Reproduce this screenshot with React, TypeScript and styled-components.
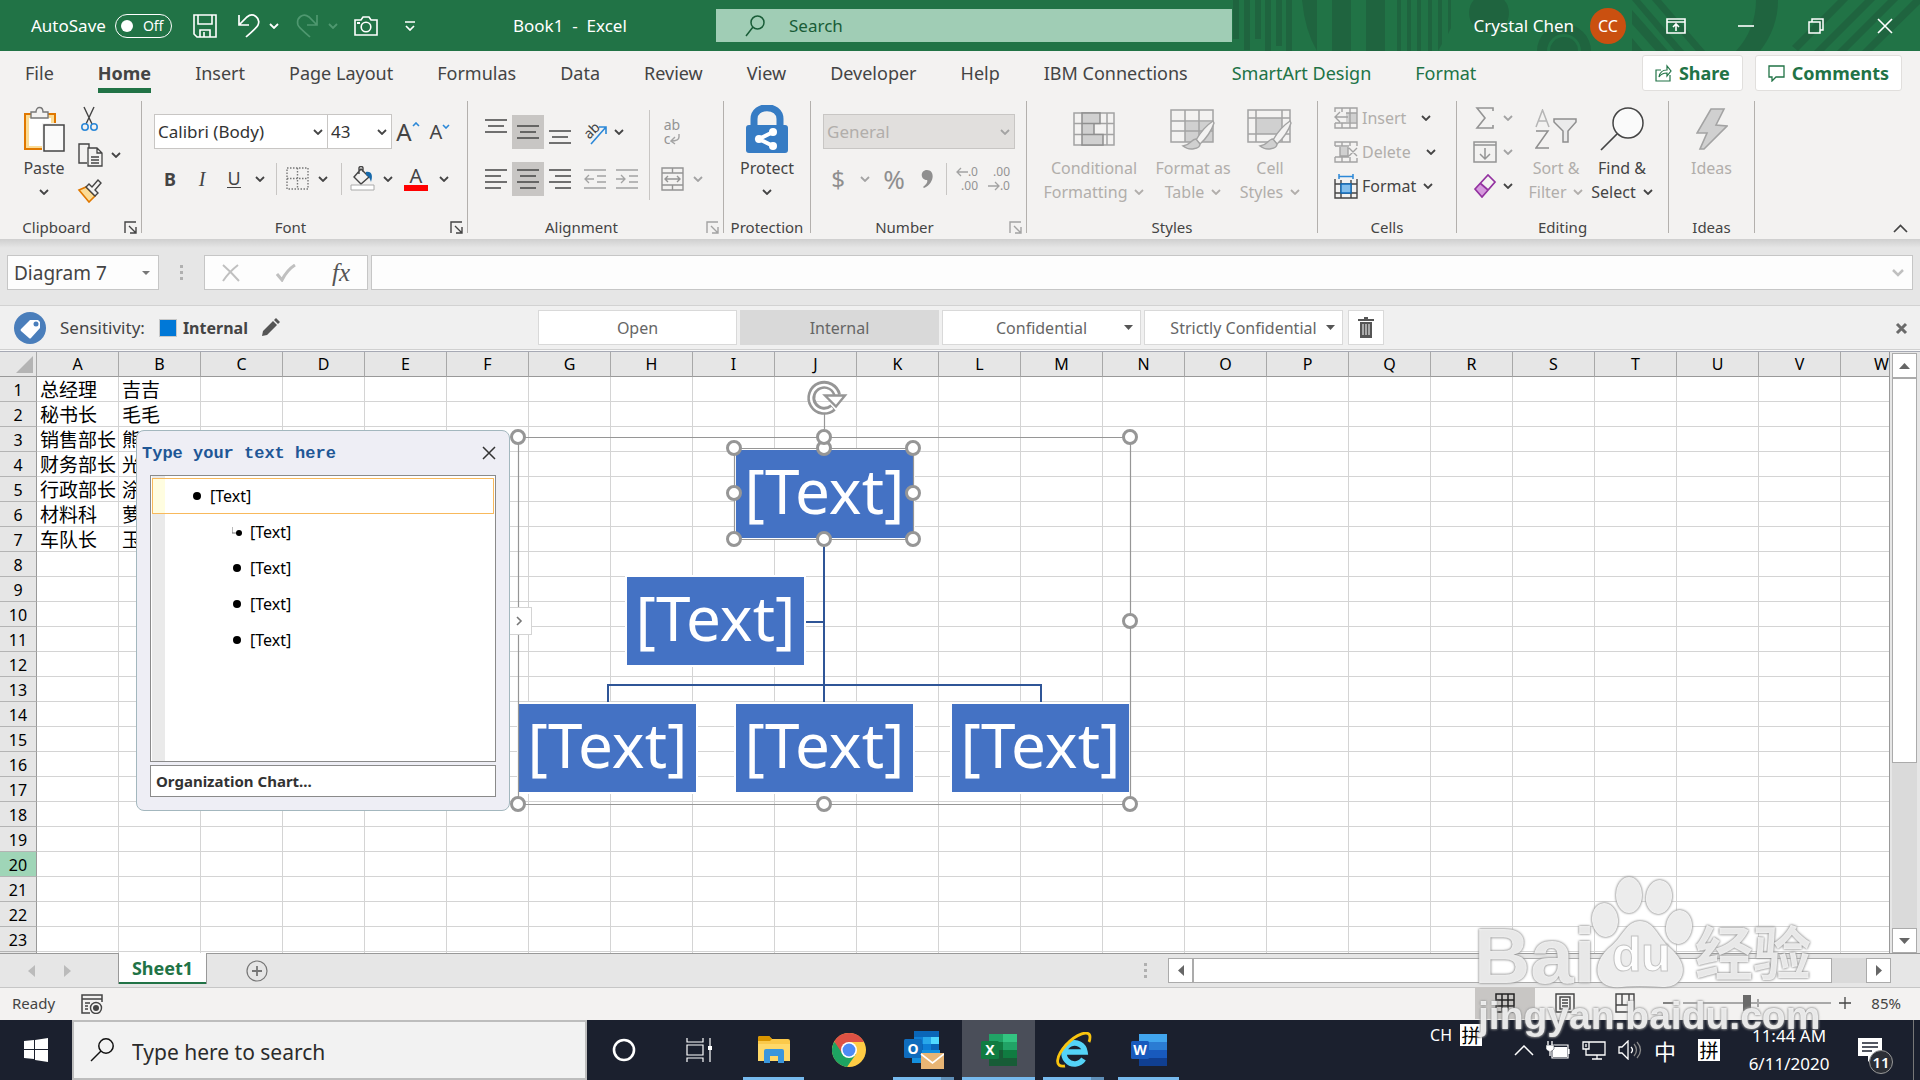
import React from "react";
import styled, { createGlobalStyle, css } from "styled-components";

const GlobalStyle = createGlobalStyle`
  *, *::before, *::after { box-sizing: border-box; }
  html, body { margin: 0; padding: 0; }
  body {
    overflow: hidden;
    font-family: "Noto Sans", "Noto Sans CJK SC", sans-serif;
    font-size: 16px;
    color: #444;
  }
  button, input, select { font: inherit; color: inherit; }
  button { background: none; border: 0; padding: 0; margin: 0; }
  svg { display: block; flex: none; }
`;

/* ---------- shared pieces ---------- */

const App_ = styled.div`
  display: flex;
  flex-direction: column;
  height: 100vh;
  background: #e6e6e6;
`;

const Icon = ({ w, h, children }: { w: number; h: number; children: React.ReactNode }) => (
  <svg width={w} height={h} viewBox={`0 0 ${w} ${h}`} fill="none" aria-hidden="true">
    {children}
  </svg>
);

const Chevron = ({ color = "#444", up = false }: { color?: string; up?: boolean }) => (
  <svg width="10" height="6" viewBox="0 0 10 6" fill="none" aria-hidden="true">
    <path d={up ? "M1 5l4-4 4 4" : "M1 1l4 4 4-4"} stroke={color} strokeWidth="1.8" />
  </svg>
);

const GREY = "#a3a3a3";
const DARK = "#444";
const BLUE = "#2b88d8";

/* ---------- title bar ---------- */

const TitleBar = styled.header`
  position: relative;
  display: flex;
  align-items: center;
  flex: none;
  height: 51px;
  background: #217346;
  color: #fff;
  font-size: 17px;
`;

const TitleArt = styled.svg`
  position: absolute;
  top: 0;
  right: 0;
`;

const TitleSide = styled.div<{ $end?: boolean }>`
  position: relative;
  display: flex;
  align-items: center;
  flex: 1 1 716px;
  min-width: 0;
  ${(p) => p.$end && css`
    flex-basis: 688px;
    justify-content: flex-end;
  `}
`;

const QuickAccess = styled.div`
  display: flex;
  align-items: center;
  width: 513px;
  padding-left: 31px;
`;

const AutoSave = styled.label`
  display: flex;
  align-items: center;
  gap: 9px;
  width: 162px;
`;

const Toggle = styled.span`
  display: flex;
  align-items: center;
  gap: 10px;
  width: 57px;
  height: 24px;
  padding-left: 5px;
  border: 1px solid #fff;
  border-radius: 12px;
  font-size: 14px;
`;

const ToggleInput = styled.input`
  appearance: none;
  width: 12px;
  height: 12px;
  margin: 0;
  border-radius: 50%;
  background: #fff;
`;

const TitleButton = styled.button<{ $w: number }>`
  display: flex;
  align-items: center;
  justify-content: flex-start;
  gap: 9px;
  width: ${(p) => p.$w}px;
  height: 40px;
`;

const SearchBox = styled.label`
  position: relative;
  display: flex;
  align-items: center;
  flex: none;
  gap: 24px;
  width: 516px;
  height: 33px;
  padding-left: 29px;
  background: #a0cdb5;
`;

const SearchInput = styled.input`
  flex: 1;
  min-width: 0;
  border: 0;
  padding: 0;
  background: none;
  color: #185c37;
  outline: none;
  &::placeholder { color: #185c37; opacity: 1; }
`;

const Avatar = styled.span`
  display: grid;
  place-items: center;
  width: 36px;
  height: 36px;
  margin: 0 40px 0 16px;
  border-radius: 50%;
  background: #ca5010;
  font-size: 16px;
`;

const WindowButton = styled.button<{ $w: number }>`
  display: flex;
  justify-content: flex-start;
  width: ${(p) => p.$w}px;
`;

const TitleBarView = () => (
  <TitleBar>
    <TitleArt width="688" height="51" viewBox="0 0 688 51" fill="#1f643f" aria-hidden="true">
      <path d="M1 0h6v39H1zM12 0h6v50h-6zM23 0h6v39h-6zM33 0h6v51h-6zM44 0h6v46h-6zM54 0h6v51h-6z" />
      <path d="M70 0h15v51q-12-20-15-51zM100 0h19v51h-19zM134 0h19v51h-19z" />
      <path d="M165 0h4v51h-4zM175 0h4v51h-4zM185 0h4v51h-4zM196 0h4v51h-4zM206 0h4v44l-4 7zM216 0h3v28l-3 6z" />
      <circle cx="257" cy="13" r="20" />
      <path d="M305 51a27 27 0 0 1 54 0h-10a17 17 0 0 0-34 0z" />
      <circle cx="332" cy="51" r="14" />
      <path d="M400 10l36 41h-12l-24-27zM400 0h8l44 51h-9zM420 0h9l44 51h-9zM400 38l11 13h-11z" />
      <path d="M524 0h22q0 28-18 51h-24q20-22 20-51z" />
      <path d="M560 46L606 0h10l-50 51zM582 51L633 0h10l-51 51zM605 51L656 0h10l-51 51zM630 51L681 0h7v4l-48 47z" />
    </TitleArt>
    <TitleSide>
      <QuickAccess>
        <AutoSave>
          AutoSave
          <Toggle>
            <ToggleInput type="checkbox" aria-label="AutoSave" />
            Off
          </Toggle>
        </AutoSave>
        <TitleButton $w={44} aria-label="Save">
          <Icon w={24} h={24}>
            <path d="M1 1h22v22H4l-3-3zM5 1v9h14V1M7 23v-7h10v7M11 18v5" stroke="#fff" strokeWidth="1.6" />
          </Icon>
        </TitleButton>
        <TitleButton $w={59} aria-label="Undo">
          <Icon w={23} h={24}>
            <path d="M2 1v10h10M2 11l8-8c6-5 14 1 11 8-1 3-8 8-12 12" stroke="#fff" strokeWidth="1.7" />
          </Icon>
          <Chevron color="#fff" />
        </TitleButton>
        <TitleButton $w={58} aria-label="Redo" disabled>
          <Icon w={23} h={24}>
            <path d="M21 1v10H11M21 11l-8-8C7-2 0 4 2 11c1 3 8 8 12 12" stroke="#4f9870" strokeWidth="1.7" />
          </Icon>
          <Chevron color="#4f9870" />
        </TitleButton>
        <TitleButton $w={51} aria-label="Camera">
          <Icon w={24} h={20}>
            <path d="M1 4h6l2-3h6l2 3h6v15H1z" stroke="#fff" strokeWidth="1.6" />
            <circle cx="12" cy="11" r="4.8" stroke="#fff" strokeWidth="1.6" />
            <path d="M3 6h3v2H3z" fill="#fff" />
          </Icon>
        </TitleButton>
        <TitleButton $w={20} aria-label="Customize Quick Access Toolbar">
          <Icon w={10} h={10}>
            <path d="M0 1h10M1 5l4 4 4-4" stroke="#fff" strokeWidth="1.7" />
          </Icon>
        </TitleButton>
      </QuickAccess>
      <span>Book1&nbsp; -&nbsp; Excel</span>
    </TitleSide>
    <SearchBox>
      <Icon w={20} h={22}>
        <circle cx="12.500" cy="7.500" r="6.500" stroke="#185c37" strokeWidth="1.5" />
        <path d="M8 12L1 21" stroke="#185c37" strokeWidth="1.5" />
      </Icon>
      <SearchInput type="search" placeholder="Search" />
    </SearchBox>
    <TitleSide $end>
      <span>Crystal Chen</span>
      <Avatar>CC</Avatar>
      <WindowButton $w={72} aria-label="Ribbon Display Options">
        <Icon w={20} h={16}>
          <path d="M1 1h18v14H1zM1 4h18M10 13V6M7 9l3-3 3 3" stroke="#fff" strokeWidth="1.6" />
        </Icon>
      </WindowButton>
      <WindowButton $w={70} aria-label="Minimize">
        <Icon w={16} h={16}><path d="M0 8h16" stroke="#fff" strokeWidth="1.6" /></Icon>
      </WindowButton>
      <WindowButton $w={69} aria-label="Restore Down">
        <Icon w={16} h={16}><path d="M1 4h11v11H1zM4 4V1h11v11h-3" stroke="#fff" strokeWidth="1.5" /></Icon>
      </WindowButton>
      <WindowButton $w={43} aria-label="Close">
        <Icon w={16} h={16}><path d="M1 1l14 14M15 1L1 15" stroke="#fff" strokeWidth="1.6" /></Icon>
      </WindowButton>
    </TitleSide>
  </TitleBar>
);

/* ---------- ribbon tabs ---------- */

const TabRow = styled.nav`
  display: flex;
  align-items: center;
  flex: none;
  gap: 44px;
  height: 44px;
  padding: 0 18px 0 25px;
  background: #f3f2f1;
  font-size: 18px;
`;

const Tab = styled.button<{ $active?: boolean; $context?: boolean }>`
  height: 40px;
  padding-top: 4px;
  border-bottom: 5px solid ${(p) => (p.$active ? "#217346" : "transparent")};
  color: ${(p) => (p.$context ? "#217346" : "#444")};
  font-weight: ${(p) => (p.$active ? 700 : 400)};
  white-space: nowrap;
`;

const TabActions = styled.div`
  display: flex;
  gap: 12px;
  margin-left: auto;
`;

const ActionButton = styled.button`
  display: flex;
  align-items: center;
  gap: 7px;
  height: 36px;
  padding: 0 12px;
  border: 1px solid #e1dfdd;
  border-radius: 3px;
  background: #fff;
  color: #217346;
  font-weight: 700;
`;

const TABS = ["File", "Home", "Insert", "Page Layout", "Formulas", "Data", "Review", "View", "Developer", "Help", "IBM Connections", "SmartArt Design", "Format"];

const TabsView = () => (
  <TabRow>
    {TABS.map((t) => (
      <Tab key={t} $active={t === "Home"} $context={t === "SmartArt Design" || t === "Format"}>{t}</Tab>
    ))}
    <TabActions>
      <ActionButton>
        <Icon w={17} h={18}>
          <path d="M6 6H1v11h14v-6M4 13c1-6 4-7 8-7V2l4 5-4 5V9c-4 0-6 1-8 4z" stroke="#217346" strokeWidth="1.2" />
        </Icon>
        Share
      </ActionButton>
      <ActionButton>
        <Icon w={17} h={18}>
          <path d="M1 2h15v11H8l-4 4v-4H1z" stroke="#217346" strokeWidth="1.3" />
        </Icon>
        Comments
      </ActionButton>
    </TabActions>
  </TabRow>
);

/* ---------- ribbon ---------- */

const Ribbon = styled.div`
  display: flex;
  flex: none;
  height: 144px;
  padding: 6px 0;
  background: #f3f2f1;
`;

const Group = styled.section<{ $w: number }>`
  display: flex;
  flex-direction: column;
  flex: none;
  width: ${(p) => p.$w}px;
  border-right: 1px solid #b3b0ad;
`;

const GroupBody = styled.div<{ $pad?: number }>`
  display: flex;
  flex: 1;
  padding-left: ${(p) => p.$pad || 0}px;
`;

const GroupFooter = styled.div<{ $launch?: boolean }>`
  display: grid;
  grid-template-columns: minmax(0, 1fr) ${(p) => (p.$launch ? "24px" : "")};
  padding-right: ${(p) => (p.$launch ? 4 : 0)}px;
  height: 14px;
  font-size: 15px;
  line-height: 16px;
  white-space: nowrap;
`;

const GroupTitle = styled.span`
  display: flex;
  justify-content: center;
`;

const Launcher = styled.button`
  justify-self: end;
`;

const BigButton = styled.button<{ $w?: number; $off?: boolean }>`
  display: flex;
  flex-direction: column;
  align-items: center;
  width: ${(p) => (p.$w ? `${p.$w}px` : "100%")};
  color: ${(p) => (p.$off ? "#b1aeab" : "#444")};
  line-height: 24px;
  white-space: nowrap;
`;

const BigIcon = styled.span`
  display: grid;
  place-items: center;
  height: 55px;
`;

const BigLine = styled.span`
  display: flex;
  align-items: center;
  justify-content: center;
  gap: 7px;
  height: 24px;
`;

const Rows = styled.div`
  display: flex;
  flex-direction: column;
  gap: 12px;
  padding-top: 13px;
`;

const ToolRow = styled.div`
  display: flex;
  align-items: center;
  height: 35px;
`;

const Tool = styled.button<{ $w?: number; $on?: boolean; $left?: number }>`
  display: grid;
  place-items: center;
  width: ${(p) => p.$w || 32}px;
  height: 34px;
  margin-left: ${(p) => p.$left || 0}px;
  background: ${(p) => (p.$on ? "#c8c6c4" : "transparent")};
`;

const Divider = styled.span<{ $m: number; $tall?: boolean }>`
  width: 1px;
  height: ${(p) => (p.$tall ? 90 : 32)}px;
  margin: ${(p) => (p.$tall ? "9px" : "0")} ${(p) => p.$m}px 0;
  background: #c8c6c4;
`;

const Combo = styled.span<{ $w: number; $off?: boolean }>`
  position: relative;
  display: flex;
  align-items: center;
  width: ${(p) => p.$w}px;
  height: 35px;
  border: 1px solid #c8c6c4;
  background: ${(p) => (p.$off ? "#e1dfdd" : "#fff")};
  & + & { border-left: 0; }
  & > svg { position: absolute; right: 4px; }
`;

const ComboSelect = styled.select<{ $off?: boolean }>`
  appearance: none;
  width: 100%;
  height: 100%;
  padding: 0 0 0 3px;
  border: 0;
  border-radius: 0;
  background: transparent;
  color: ${(p) => (p.$off ? "#b1aeab" : "#333")};
  font-size: 17px;
  opacity: 1;
`;

const SmallColumn = styled.div<{ $w?: number; $row: number }>`
  display: grid;
  grid-auto-rows: ${(p) => p.$row}px;
  align-content: start;
  width: ${(p) => (p.$w ? `${p.$w}px` : "auto")};
`;

const SmallButton = styled.button<{ $off?: boolean; $gap?: number }>`
  display: flex;
  align-items: center;
  color: ${(p) => (p.$off ? "#b1aeab" : "#444")};
  & > svg:last-child:not(:first-child) { margin-left: ${(p) => p.$gap || 0}px; }
`;

const SmallLabel = styled.span`
  padding-left: 4px;
`;

const CollapseRibbon = styled.button`
  align-self: flex-end;
  margin: 0 12px 0 auto;
`;

const Footer = ({ title, launch, off }: { title: string; launch?: boolean; off?: boolean }) => (
  <GroupFooter $launch={launch}>
    <GroupTitle>{title}</GroupTitle>
    {launch && (
      <Launcher aria-label={`${title} settings`}>
        <Icon w={13} h={13}>
          <path d="M1 12V1h11M5 5l7 7M12 6v6H6" stroke={off ? GREY : DARK} strokeWidth="1.4" />
        </Icon>
      </Launcher>
    )}
  </GroupFooter>
);

const Lines = ({ widths, top = 0, align = "center" }: { widths: number[]; top?: number; align?: "left" | "center" | "right" }) => (
  <Icon w={22} h={26}>
    {widths.map((w, i) => {
      const x = align === "left" ? 0 : align === "right" ? 22 - w : (22 - w) / 2;
      return <path key={i} d={`M${x} ${top + i * 6 + 1}h${w}`} stroke={DARK} strokeWidth="1.5" />;
    })}
  </Icon>
);

const Glyph = styled.span<{ $size?: number; $bold?: boolean; $italic?: boolean; $under?: boolean; $off?: boolean }>`
  font-size: ${(p) => p.$size || 18}px;
  line-height: 1;
  font-weight: ${(p) => (p.$bold ? 700 : 400)};
  font-style: ${(p) => (p.$italic ? "italic" : "normal")};
  font-family: ${(p) => (p.$italic ? '"Liberation Serif", serif' : "inherit")};
  border-bottom: ${(p) => (p.$under ? "1px solid #444" : "0")};
  color: ${(p) => (p.$off ? "#8f8f8f" : "#444")};
`;

const SizedA = styled.span`
  display: flex;
  align-items: flex-start;
  & > svg { margin-top: 2px; }
`;

const ColorGlyph = styled.span`
  display: flex;
  flex-direction: column;
  align-items: center;
  width: 24px;
  font-size: 20px;
  line-height: 18px;
  border-bottom: 6px solid #f00;
`;

const Decimals = styled.span`
  display: grid;
  justify-items: end;
  width: 24px;
  font-size: 12px;
  line-height: 14px;
  color: #949494;
`;

const DecimalLine = styled.span`
  display: flex;
  align-items: center;
`;

const WrapGlyph = styled.span`
  display: grid;
  font-size: 14px;
  line-height: 14px;
  color: #949494;
`;

const Arrow = ({ right = false }: { right?: boolean }) => (
  <Icon w={12} h={10}>
    <path d={right ? "M0 5h11M7 1l4 4-4 4" : "M12 5H1M5 1L1 5l4 4"} stroke={GREY} strokeWidth="1.3" />
  </Icon>
);

const Brush = () => (
  <>
    <path d="M43 13c-6 4-13 12-17 19l4 4c6-5 12-14 14-21z" fill="#f3f2f1" stroke={GREY} strokeWidth="1.4" />
    <path d="M26 31c-5 0-5 6-13 7 6 5 17 3 17-2z" fill="#d0d0d0" stroke={GREY} strokeWidth="1.4" />
  </>
);

const RibbonView = () => (
  <Ribbon>
    <Group $w={142}>
      <GroupBody $pad={14}>
        <BigButton $w={60}>
          <BigIcon>
            <Icon w={42} h={46}>
              <path d="M2 8h30v35H2z" fill="#fbdc96" stroke="#e07800" strokeWidth="2" />
              <path d="M6 12h22v28H6z" fill="#fff" />
              <path d="M8 12V6h5c0-6 7-6 7 0h5v6z" fill="#f3f2f1" stroke="#777" strokeWidth="1.4" />
              <path d="M19 17h23v29H19z" fill="#f3f2f1" />
              <path d="M21 19h20v26H21z" fill="#fafafa" stroke={DARK} strokeWidth="1.5" />
            </Icon>
          </BigIcon>
          <BigLine>Paste</BigLine>
          <BigLine><Chevron /></BigLine>
        </BigButton>
        <SmallColumn $row={36} $w={60}>
          <SmallButton aria-label="Cut">
            <Icon w={32} h={26}>
              <path d="M10 1l8 17M20 1l-8 17" stroke={DARK} strokeWidth="1.4" />
              <circle cx="11" cy="21" r="3.200" stroke={BLUE} strokeWidth="1.6" />
              <circle cx="20" cy="21" r="3.200" stroke={BLUE} strokeWidth="1.6" />
            </Icon>
          </SmallButton>
          <SmallButton aria-label="Copy" $gap={5}>
            <Icon w={32} h={24}>
              <path d="M13 20H5V1h10v4" stroke={DARK} strokeWidth="1.4" />
              <path d="M14 5h9l5 5v13H14zM23 5v5h5M17 14h8M17 17h8M17 20h8" stroke={DARK} strokeWidth="1.3" />
            </Icon>
            <Chevron />
          </SmallButton>
          <SmallButton aria-label="Format Painter">
            <Icon w={32} h={24}>
              <path d="M5 11l7-3 9 9-6 6z" fill="#fbdc96" stroke="#e07800" strokeWidth="1.6" />
              <path d="M12 8l3-3 3 3 6-7 3 3-6 7 3 3-3 3z" fill="#f3f2f1" stroke={DARK} strokeWidth="1.4" />
            </Icon>
          </SmallButton>
        </SmallColumn>
      </GroupBody>
      <Footer title="Clipboard" launch />
    </Group>

    <Group $w={326}>
      <GroupBody $pad={12}>
        <Rows>
          <ToolRow>
            <Combo $w={174}>
              <ComboSelect aria-label="Font" defaultValue="c"><option value="c">Calibri (Body)</option></ComboSelect>
              <Chevron />
            </Combo>
            <Combo $w={64}>
              <ComboSelect aria-label="Font Size" defaultValue="43"><option>43</option></ComboSelect>
              <Chevron />
            </Combo>
            <Tool aria-label="Increase Font Size">
              <SizedA><Glyph $size={24}>A</Glyph><Icon w={8} h={5}><path d="M1 4l3-3 3 3" stroke={BLUE} strokeWidth="1.6" /></Icon></SizedA>
            </Tool>
            <Tool aria-label="Decrease Font Size">
              <SizedA><Glyph $size={20}>A</Glyph><Icon w={8} h={5}><path d="M1 1l3 3 3-3" stroke={BLUE} strokeWidth="1.6" /></Icon></SizedA>
            </Tool>
          </ToolRow>
          <ToolRow>
            <Tool><Glyph $bold>B</Glyph></Tool>
            <Tool><Glyph $italic $size={20}>I</Glyph></Tool>
            <Tool><Glyph $under>U</Glyph></Tool>
            <Tool $w={20} aria-label="Underline options"><Chevron /></Tool>
            <Divider $m={6} />
            <Tool $w={28} aria-label="Borders">
              <Icon w={23} h={23}>
                <path d="M1 1h21v21H1zM11.500 1v21M1 11.500h21" stroke="#777" strokeWidth="1.4" strokeDasharray="1.500 1.500" />
              </Icon>
            </Tool>
            <Tool $w={24} aria-label="Border options"><Chevron /></Tool>
            <Divider $m={6} />
            <Tool $w={28} aria-label="Fill Color">
              <Icon w={25} h={25}>
                <path d="M11 3l8 8-8 7-7-7zM9 8V2c0-2 4-2 4 0v4" stroke={DARK} strokeWidth="1.4" />
                <path d="M16 6c6-1 7 4 5 10-1-3-2-6-5-7z" fill="#1769aa" />
                <path d="M1 19h23v5H1z" fill="#fff" stroke="#aaa" />
              </Icon>
            </Tool>
            <Tool $w={24} aria-label="Fill options"><Chevron /></Tool>
            <Tool aria-label="Font Color"><ColorGlyph>A</ColorGlyph></Tool>
            <Tool $w={24} aria-label="Font Color options"><Chevron /></Tool>
          </ToolRow>
        </Rows>
      </GroupBody>
      <Footer title="Font" launch />
    </Group>

    <Group $w={256}>
      <GroupBody $pad={12}>
        <Rows>
          <ToolRow>
            <Tool aria-label="Top Align"><Lines widths={[22, 16, 22]} /></Tool>
            <Tool $on aria-label="Middle Align"><Lines widths={[22, 16, 22]} top={6} /></Tool>
            <Tool aria-label="Bottom Align"><Lines widths={[22, 16, 22]} top={11} /></Tool>
            <Tool $left={3} aria-label="Orientation">
              <Icon w={28} h={28}>
                <text x="3" y="19" transform="rotate(-45 9 14)" fontSize="14" fill={DARK}>ab</text>
                <path d="M10 26L25 9M18 9h7v7" stroke={BLUE} strokeWidth="1.6" />
              </Icon>
            </Tool>
            <Tool $w={16} aria-label="Orientation options"><Chevron /></Tool>
          </ToolRow>
          <ToolRow>
            <Tool aria-label="Align Left"><Lines align="left" top={3} widths={[22, 16, 22, 16]} /></Tool>
            <Tool $on aria-label="Center"><Lines top={3} widths={[22, 16, 22, 16]} /></Tool>
            <Tool aria-label="Align Right"><Lines align="right" top={3} widths={[22, 16, 22, 16]} /></Tool>
            <Tool $left={3} aria-label="Decrease Indent">
              <Icon w={22} h={20}><path d="M0 1h22M13 7h9M13 13h9M0 19h22M10 10H1M5 6l-4 4 4 4" stroke={GREY} strokeWidth="1.3" /></Icon>
            </Tool>
            <Tool aria-label="Increase Indent">
              <Icon w={22} h={20}><path d="M0 1h22M13 7h9M13 13h9M0 19h22M0 10h9M5 6l4 4-4 4" stroke={GREY} strokeWidth="1.3" /></Icon>
            </Tool>
          </ToolRow>
        </Rows>
        <Divider $m={6} $tall />
        <Rows>
          <ToolRow>
            <Tool aria-label="Wrap Text">
              <WrapGlyph>
                <span>ab</span>
                <DecimalLine>c<Icon w={10} h={12}><path d="M9 1v3q0 4-8 4M5 4L1 8l4 3" stroke={GREY} strokeWidth="1.400" /></Icon></DecimalLine>
              </WrapGlyph>
            </Tool>
          </ToolRow>
          <ToolRow>
            <Tool aria-label="Merge and Center">
              <Icon w={23} h={24}>
                <path d="M1 1h21v22H1zM1 6h21M1 18h21M11.500 1v5M11.500 18v5M4 12h15M7 9l-3 3 3 3M16 9l3 3-3 3" stroke="#949494" strokeWidth="1.400" />
              </Icon>
            </Tool>
            <Tool $w={20} aria-label="Merge options"><Chevron color={GREY} /></Tool>
          </ToolRow>
        </Rows>
      </GroupBody>
      <Footer title="Alignment" launch off />
    </Group>

    <Group $w={87}>
      <GroupBody>
        <BigButton>
          <BigIcon>
            <Icon w={42} h={48}>
              <path d="M8 22V14C8-1 34-1 34 14v8" stroke="#367cc4" strokeWidth="7" />
              <rect y="20" width="42" height="28" rx="3" fill="#367cc4" />
              <path d="M27 27L13 34l14 7" stroke="#fff" strokeWidth="4" />
              <circle cx="27" cy="27" r="4" fill="#fff" /><circle cx="27" cy="41" r="4" fill="#fff" /><circle cx="13" cy="34" r="4" fill="#fff" />
            </Icon>
          </BigIcon>
          <BigLine>Protect</BigLine>
          <BigLine><Chevron /></BigLine>
        </BigButton>
      </GroupBody>
      <Footer title="Protection" />
    </Group>

    <Group $w={216}>
      <GroupBody $pad={12}>
        <Rows>
          <ToolRow>
            <Combo $w={192} $off>
              <ComboSelect $off disabled aria-label="Number Format" defaultValue="General"><option>General</option></ComboSelect>
              <Chevron color={GREY} />
            </Combo>
          </ToolRow>
          <ToolRow>
            <Tool $w={30}><Glyph $off $size={24}>$</Glyph></Tool>
            <Tool $w={24} aria-label="Accounting options"><Chevron color={GREY} /></Tool>
            <Tool $w={34}><Glyph $off $size={26}>%</Glyph></Tool>
            <Tool aria-label="Comma Style">
              <Icon w={12} h={20}><path d="M6 1c8 0 8 13-3 18l-1-1c4-3 5-6 4-7C-1 11-1 1 6 1z" fill="#8f8f8f" /></Icon>
            </Tool>
            <Divider $m={3} />
            <Tool aria-label="Increase Decimal"><Decimals><DecimalLine><Arrow />.0</DecimalLine><span>.00</span></Decimals></Tool>
            <Tool aria-label="Decrease Decimal"><Decimals><span>.00</span><DecimalLine><Arrow right />.0</DecimalLine></Decimals></Tool>
          </ToolRow>
        </Rows>
      </GroupBody>
      <Footer title="Number" launch off />
    </Group>

    <Group $w={291}>
      <GroupBody $pad={10}>
        <BigButton $w={114} $off>
          <BigIcon>
            <Icon w={42} h={34}>
              <path d="M1 1h40v32H1zM1 11.500h40M1 22.500h40M34 1v32" stroke={GREY} strokeWidth="1.5" />
              <path d="M9 1h18v10.500H9zM9 11.500h12v11H9zM9 22.500h21V33H9z" fill="#d0d0d0" stroke="#8f8f8f" strokeWidth="1.5" />
            </Icon>
          </BigIcon>
          <BigLine>Conditional</BigLine>
          <BigLine>Formatting<Chevron color="#b1aeab" /></BigLine>
        </BigButton>
        <BigButton $w={84} $off>
          <BigIcon>
            <Icon w={46} h={42}>
              <path d="M15 14h28v20H15z" fill="#d0d0d0" />
              <path d="M1 2h42v32H1zM1 13h42M1 23h42M15 2v32M29 2v32" stroke={GREY} strokeWidth="1.5" />
              <Brush />
            </Icon>
          </BigIcon>
          <BigLine>Format as</BigLine>
          <BigLine>Table<Chevron color="#b1aeab" /></BigLine>
        </BigButton>
        <BigButton $w={70} $off>
          <BigIcon>
            <Icon w={46} h={42}>
              <path d="M9 10h26v16H9z" fill="#d0d0d0" />
              <path d="M1 2h42v32H1zM1 10h42M1 26h42M9 2v32M35 2v32" stroke={GREY} strokeWidth="1.5" />
              <Brush />
            </Icon>
          </BigIcon>
          <BigLine>Cell</BigLine>
          <BigLine>Styles<Chevron color="#b1aeab" /></BigLine>
        </BigButton>
      </GroupBody>
      <Footer title="Styles" />
    </Group>

    <Group $w={139}>
      <GroupBody $pad={16}>
        <SmallColumn $row={34}>
          <SmallButton $off $gap={15}>
            <Icon w={24} h={22}>
              <path d="M12 6h11v9H12z" fill="#d0d0d0" />
              <path d="M1 5V1h22v20H1v-5M8 1v4M16 1v20M8 16v5M1 16h22M12 6h11M14 10H1M6 5l-5 5 5 5" stroke={GREY} strokeWidth="1.4" />
            </Icon>
            <SmallLabel>Insert</SmallLabel><Chevron />
          </SmallButton>
          <SmallButton $off $gap={15}>
            <Icon w={24} h={22}>
              <path d="M6 6h8v9H6z" fill="#d0d0d0" />
              <path d="M1 5V1h22v4M1 16v5h22v-4M8 1v4M16 1v4M8 16v5M16 16v5M1 5h14M1 16h14M6 6v9h8V6M15 7l8 8M23 7l-8 8" stroke={GREY} strokeWidth="1.4" />
            </Icon>
            <SmallLabel>Delete</SmallLabel><Chevron />
          </SmallButton>
          <SmallButton $gap={7}>
            <Icon w={24} h={26}>
              <path d="M5 1v5M19 1v5M5 3.500h14" stroke={BLUE} strokeWidth="1.5" />
              <path d="M1 6v19h22V6M1 11h22M1 20h22M7 7v18M17 7v18" stroke={DARK} strokeWidth="1.4" />
              <path d="M7 11h10v9H7z" fill="#83beec" stroke="#106ebe" strokeWidth="1.4" />
            </Icon>
            <SmallLabel>Format</SmallLabel><Chevron />
          </SmallButton>
        </SmallColumn>
      </GroupBody>
      <Footer title="Cells" />
    </Group>

    <Group $w={212}>
      <GroupBody $pad={16}>
        <SmallColumn $row={34} $w={54}>
          <SmallButton $gap={6} aria-label="AutoSum">
            <Icon w={24} h={22}><path d="M20 4V1H4l8 10-8 10h16v-3" stroke="#949494" strokeWidth="1.6" /></Icon>
            <Chevron color={GREY} />
          </SmallButton>
          <SmallButton $gap={6} aria-label="Fill">
            <Icon w={24} h={22}><path d="M1 1h22v20H1zM1 4h22M12 7v11M7 13l5 5 5-5" stroke="#949494" strokeWidth="1.5" /></Icon>
            <Chevron color={GREY} />
          </SmallButton>
          <SmallButton $gap={6} aria-label="Clear">
            <Icon w={24} h={24}>
              <path d="M2 15l5-6 7 7-5 7z" fill="#d59add" />
              <path d="M2 15L15 1l7 7L9 23zM7 9l8 7" stroke="#9332a0" strokeWidth="1.7" />
            </Icon>
            <Chevron />
          </SmallButton>
        </SmallColumn>
        <BigButton $w={58} $off>
          <BigIcon>
            <Icon w={42} h={40}>
              <path d="M1 18L7.500 1 14 18M3.500 12h8" stroke="#b5b5b5" strokeWidth="1.5" />
              <path d="M1 22h12L1 39h13" stroke="#8f8f8f" strokeWidth="1.500" />
              <path d="M19 10h22v3l-8 9v11h-5V22l-9-9z" fill="#ebebeb" stroke="#8f8f8f" strokeWidth="1.5" />
            </Icon>
          </BigIcon>
          <BigLine>Sort &amp;</BigLine>
          <BigLine>Filter<Chevron color="#b1aeab" /></BigLine>
        </BigButton>
        <BigButton $w={74}>
          <BigIcon>
            <Icon w={44} h={44}>
              <circle cx="28" cy="16" r="15" fill="#fafafa" stroke={DARK} strokeWidth="1.500" />
              <path d="M17 27L1 43" stroke={DARK} strokeWidth="1.700" />
            </Icon>
          </BigIcon>
          <BigLine>Find &amp;</BigLine>
          <BigLine>Select<Chevron /></BigLine>
        </BigButton>
      </GroupBody>
      <Footer title="Editing" />
    </Group>

    <Group $w={86}>
      <GroupBody>
        <BigButton $off>
          <BigIcon>
            <Icon w={32} h={42}>
              <path d="M15 1h13l-8 16 11 1L8 41H4l7-16H1z" fill="#d0d0d0" stroke={GREY} strokeWidth="1.6" />
            </Icon>
          </BigIcon>
          <BigLine>Ideas</BigLine>
        </BigButton>
      </GroupBody>
      <Footer title="Ideas" />
    </Group>
    <CollapseRibbon aria-label="Collapse the Ribbon">
      <Icon w={15} h={9}><path d="M1 8l6.500-6.500L14 8" stroke={DARK} strokeWidth="1.7" /></Icon>
    </CollapseRibbon>
  </Ribbon>
);

/* ---------- formula bar ---------- */

const FormulaBar = styled.div`
  display: flex;
  flex: none;
  height: 66px;
  padding: 16px 7px 15px;
  background: linear-gradient(#cfcfcf, #e6e6e6 9px);
`;

const NameBox = styled.div`
  display: flex;
  align-items: center;
  width: 152px;
  border: 1px solid #c6c6c6;
  background: #fdfdfd;
`;

const PlainInput = styled.input`
  flex: 1;
  min-width: 0;
  height: 100%;
  padding: 0 6px;
  border: 0;
  background: transparent;
  font-size: 19px;
  outline: none;
`;

const DropButton = styled.button`
  padding: 0 8px;
`;

const Dots = styled.span`
  display: grid;
  align-content: center;
  justify-items: center;
  gap: 3px;
  width: 45px;
  & > i { width: 3px; height: 3px; background: #b0b0b0; }
`;

const FormulaTools = styled.div`
  display: flex;
  align-items: center;
  justify-content: space-between;
  width: 164px;
  margin-right: 3px;
  padding: 0 17px;
  border: 1px solid #c6c6c6;
  background: #fdfdfd;
`;

const Fx = styled.button`
  font-family: "Liberation Serif", serif;
  font-size: 25px;
  line-height: 24px;
  font-style: italic;
  color: #555;
`;

const FormulaField = styled.div`
  display: flex;
  align-items: center;
  flex: 1;
  border: 1px solid #c6c6c6;
  background: #fdfdfd;
`;

const Triangle = ({ dir = "down", color = "#666", size = 8 }: { dir?: "up" | "down" | "left" | "right"; color?: string; size?: number }) => {
  const h = Math.round(size * 0.55);
  const vertical = dir === "up" || dir === "down";
  const w = vertical ? size : h;
  const t = vertical ? h : size;
  const d = {
    down: `M0 0h${w}L${w / 2} ${t}z`,
    up: `M0 ${t}h${w}L${w / 2} 0z`,
    left: `M${w} 0v${t}L0 ${t / 2}z`,
    right: `M0 0v${t}L${w} ${t / 2}z`,
  }[dir];
  return <Icon w={w} h={t}><path d={d} fill={color} /></Icon>;
};

const FormulaBarView = () => (
  <FormulaBar>
    <NameBox>
      <PlainInput aria-label="Name Box" defaultValue="Diagram 7" />
      <DropButton aria-label="Names"><Triangle color="#777" /></DropButton>
    </NameBox>
    <Dots><i /><i /><i /></Dots>
    <FormulaTools>
      <button aria-label="Cancel"><Icon w={18} h={18}><path d="M1 1q8 7 16 16M16 1Q7 8 1 17" stroke="#c0c0c0" strokeWidth="2" /></Icon></button>
      <button aria-label="Enter"><Icon w={20} h={18}><path d="M1 10l5 6Q11 6 19 1" stroke="#c0c0c0" strokeWidth="3" /></Icon></button>
      <Fx aria-label="Insert Function">fx</Fx>
    </FormulaTools>
    <FormulaField>
      <PlainInput aria-label="Formula Bar" />
      <DropButton aria-label="Expand Formula Bar"><Icon w={12} h={8}><path d="M1 1l5 5 5-5" stroke="#c0c0c0" strokeWidth="2.500" /></Icon></DropButton>
    </FormulaField>
  </FormulaBar>
);

/* ---------- sensitivity bar ---------- */

const Sensitivity = styled.div`
  display: flex;
  align-items: center;
  flex: none;
  height: 47px;
  padding: 0 12px 2px 14px;
  border-top: 1px solid #d2d2d2;
  border-bottom: 1px solid #a6a9b4;
  background: linear-gradient(#f0f0f0 43px, #d0d0d0 43px 44px, #f8f8f8 44px);
`;

const SensitivityInfo = styled.div`
  display: flex;
  align-items: center;
  width: 524px;
  line-height: 24px;
`;

const SensitivityName = styled.span`
  padding: 0 14px;
  font-size: 17px;
`;

const Swatch = styled.span`
  width: 18px;
  height: 18px;
  margin-right: 6px;
  border: 1px solid #c8c8c8;
  background: #0078d7;
`;

const LevelName = styled.strong`
  margin-right: 13px;
  font-weight: 700;
`;

const Levels = styled.div`
  display: flex;
  gap: 3px;
`;

const Level = styled.button<{ $on?: boolean }>`
  display: grid;
  grid-template-columns: 16px minmax(0, 1fr) 16px;
  align-items: center;
  width: 199px;
  height: 35px;
  border: 1px solid #d9d9d9;
  background: ${(p) => (p.$on ? "#d9d9d9" : "#fff")};
  color: #666;
  white-space: nowrap;
  & > span { grid-column: 2; display: flex; justify-content: center; }
`;

const TrashButton = styled.button`
  display: grid;
  place-items: center;
  width: 36px;
  height: 35px;
  margin-left: 5px;
  border: 1px solid #d9d9d9;
  background: #fff;
`;

const CloseBar = styled.button`
  margin-left: auto;
  padding-top: 2px;
`;

const SensitivityView = () => (
  <Sensitivity>
    <SensitivityInfo>
      <Icon w={32} h={32}>
        <circle cx="16" cy="16" r="16" fill="#4a7ebb" />
        <path d="M7 17l9-9h8l2 2v6L17 26q-1 1-2 0l-8-7q-1-1 0-2z" fill="#fff" />
        <circle cx="22" cy="12" r="2.500" fill="#4a7ebb" />
      </Icon>
      <SensitivityName>Sensitivity:</SensitivityName>
      <Swatch />
      <LevelName>Internal</LevelName>
      <button aria-label="Edit label">
        <Icon w={19} h={19}>
          <path d="M1 18l1-5L12 3l4 4L6 17zM13 2l2-2 4 4-2 2z" fill="#555" />
        </Icon>
      </button>
    </SensitivityInfo>
    <Levels>
      <Level><span>Open</span></Level>
      <Level $on><span>Internal</span></Level>
      <Level><span>Confidential</span><Triangle color="#555" size={9} /></Level>
      <Level><span>Strictly Confidential</span><Triangle color="#555" size={9} /></Level>
    </Levels>
    <TrashButton aria-label="Remove label">
      <Icon w={16} h={21}>
        <path d="M0 2h6V0h4v2h6v2H0zM2 5h12v16H2z" fill="#555" />
        <path d="M5 7v11M8 7v11M11 7v11" stroke="#fff" />
      </Icon>
    </TrashButton>
    <CloseBar aria-label="Close sensitivity bar">
      <Icon w={13} h={13}><path d="M2 2l9 9M11 2l-9 9" stroke="#6a6a6a" strokeWidth="3" /></Icon>
    </CloseBar>
  </Sensitivity>
);

/* ---------- sheet ---------- */

const SheetArea = styled.main`
  display: flex;
  flex: 1;
  min-height: 0;
  position: relative;
`;

const GridPane = styled.div`
  position: relative;
  flex: 1;
  min-width: 0;
  overflow: hidden;
  border-right: 1px solid #999;
  background: #fff;
`;

const Table = styled.table`
  table-layout: fixed;
  width: 1923px;
  border-collapse: separate;
  border-spacing: 0;
  line-height: 20px;
  color: #000;
  & col { width: 82px; }
  & col:first-child { width: 37px; }
`;

const ColHead = styled.th`
  height: 25px;
  padding: 0;
  border-right: 1px solid #a8a8a8;
  border-bottom: 1px solid #999;
  background: #e6e6e6;
  font-size: 16px;
  font-weight: 400;
  & > svg { margin-left: 16px; }
`;

const RowHead = styled.th<{ $on?: boolean }>`
  height: 25px;
  padding: 2px 0 0;
  border-right: 1px solid #999;
  border-bottom: 1px solid #b4b4b4;
  background: ${(p) => (p.$on ? "#9fd5b7" : "#e6e6e6")};
  font-size: 16px;
  font-weight: 400;
`;

const Cell = styled.td`
  height: 25px;
  padding: 0 0 0 3px;
  border-right: 1px solid #d4d4d4;
  border-bottom: 1px solid #d4d4d4;
  font-family: "Noto Sans CJK SC", sans-serif;
  font-size: 19px;
  font-weight: 400;
  white-space: nowrap;
`;

const COLS = "ABCDEFGHIJKLMNOPQRSTUVW".split("");
const DATA = [
  ["总经理", "吉吉"],
  ["秘书长", "毛毛"],
  ["销售部长", "熊"],
  ["财务部长", "光"],
  ["行政部长", "涂"],
  ["材料科", "萝"],
  ["车队长", "玉"],
];

/* ---------- SmartArt diagram ---------- */

const Canvas = styled.svg`
  position: absolute;
  left: 0;
  top: 0;
`;

const Node = styled.div<{ $x: number; $y: number }>`
  position: absolute;
  left: ${(p) => p.$x}px;
  top: ${(p) => p.$y}px;
  display: grid;
  place-items: center;
  width: 181px;
  height: 92px;
  padding-bottom: 8px;
  border: 2px solid #fff;
  background: #4472c4;
  color: #fff;
  font-size: 62px;
  line-height: 80px;
`;

const HANDLES: [number, number][] = [
  [518, 86], [1130, 86], [1130, 270], [518, 453], [824, 453], [1130, 453],
  [734, 97], [824, 97], [913, 97], [734, 142], [913, 142], [734, 188], [824, 188], [913, 188], [824, 86],
];

const PaneHandle = styled.button`
  position: absolute;
  left: 508px;
  top: 255px;
  display: grid;
  place-items: center;
  width: 24px;
  height: 28px;
  border: 1px solid #d4d4d4;
  background: #fff;
`;

const TextPane = styled.section`
  position: absolute;
  left: 136px;
  top: 78px;
  display: flex;
  flex-direction: column;
  width: 374px;
  height: 381px;
  padding: 0 13px 13px;
  border: 1px solid #a3b7be;
  border-radius: 8px;
  background: #eeeef5;
  color: #000;
`;

const PaneHeader = styled.div`
  display: flex;
  align-items: center;
  justify-content: space-between;
  height: 44px;
  margin-left: -8px;
  font-family: "Liberation Mono", monospace;
  font-size: 17px;
  font-weight: 700;
  color: #1f5796;
`;

const PaneList = styled.ul`
  flex: 1;
  margin: 0 0 3px;
  padding: 2px 1px;
  list-style: none;
  border: 1px solid #8a8a8a;
  background: linear-gradient(90deg, #fff 1px, #eaeaea 1px 14px, #fff 14px);
`;

const PaneItem = styled.li<{ $level: number; $on?: boolean }>`
  display: flex;
  align-items: center;
  gap: 8px;
  height: 36px;
  padding-left: ${(p) => (p.$level ? 79 : 39)}px;
  border: 1px solid ${(p) => (p.$on ? "#f8b95c" : "transparent")};
  ${(p) => p.$on && css`background: linear-gradient(90deg, #fffde0 12px, #fff 12px);`}
`;

const PaneFooter = styled.button`
  height: 32px;
  padding-left: 5px;
  border: 1px solid #8a8a8a;
  background: #fff;
  color: #333;
  font-size: 15px;
  font-weight: 700;
  text-align: left;
`;

const Bullet = () => <Icon w={10} h={10}><circle cx="5" cy="5" r="4" fill="#000" /></Icon>;

/* ---------- scrollbars ---------- */

const VScroll = styled.div`
  display: flex;
  flex-direction: column;
  flex: none;
  width: 30px;
  padding: 1px 3px 0 2px;
  background: #e6e6e6;
`;

const ScrollButton = styled.button`
  display: grid;
  place-items: center;
  flex: none;
  width: 25px;
  height: 25px;
  border: 1px solid #ababab;
  background: #fff;
`;

const VTrack = styled.div`
  flex: 1;
  background: #dadada;
`;

const VThumb = styled.div`
  height: 70%;
  border: 1px solid #ababab;
  background: #fff;
`;

const SheetBar = styled.div`
  display: flex;
  flex: none;
  height: 35px;
  border-top: 1px solid #999;
  border-bottom: 1px solid #c6c6c6;
`;

const SheetNav = styled.div`
  display: flex;
  align-items: center;
  gap: 29px;
  width: 118px;
  padding-left: 28px;
`;

const SheetTab = styled.button`
  width: 89px;
  height: 31px;
  margin-top: -1px;
  border: solid #999;
  border-width: 0 1px;
  padding-bottom: 2px;
  box-shadow: inset 0 -2px #217346;
  background: #fff;
  color: #217346;
  font-size: 18px;
  font-weight: 700;
`;

const AddSheet = styled.button`
  margin-left: 39px;
`;

const HScroll = styled.div`
  display: flex;
  align-items: center;
  width: 797px;
  margin-left: auto;
  padding-bottom: 1px;
  padding-right: 29px;
`;

const HTrack = styled.div`
  flex: 1;
  height: 25px;
  background: #dadada;
`;

const HThumb = styled.div`
  width: 95%;
  height: 25px;
  border: 1px solid #ababab;
  background: #fff;
`;

const SheetView = () => (
  <SheetArea>
    <GridPane>
      <Table>
        <colgroup><col />{COLS.map((c) => <col key={c} />)}</colgroup>
        <thead>
          <tr>
            <ColHead aria-label="Select all"><Icon w={17} h={17}><path d="M17 0v17H0z" fill="#b4b4b4" /></Icon></ColHead>
            {COLS.map((c) => <ColHead key={c} scope="col">{c}</ColHead>)}
          </tr>
        </thead>
        <tbody>
          {Array.from({ length: 24 }, (_, r) => (
            <tr key={r}>
              <RowHead scope="row" $on={r === 19}>{r < 23 ? r + 1 : ""}</RowHead>
              {COLS.map((c, i) => <Cell key={c}>{DATA[r]?.[i]}</Cell>)}
            </tr>
          ))}
        </tbody>
      </Table>
      <Node $x={734} $y={96}>[Text]</Node>
      <Node $x={625} $y={223}>[Text]</Node>
      <Node $x={517} $y={350}>[Text]</Node>
      <Node $x={734} $y={350}>[Text]</Node>
      <Node $x={950} $y={350}>[Text]</Node>
      <Canvas width="1200" height="480" viewBox="0 1 1200 480" fill="none" aria-hidden="true">
        <path d="M824 188V351M806 271h18M608 351V334h433v17" stroke="#2f5597" strokeWidth="2" />
        <path d="M518.500 86.500h612v367h-612zM734.500 97.500h179v91h-179zM824.500 78V62" stroke="#969696" strokeWidth="1.200" />
        {HANDLES.map(([x, y]) => <circle key={`${x}-${y}`} cx={x} cy={y} r="6.500" fill="#fff" stroke="#969696" strokeWidth="3" />)}
        <path d="M833 56.500A13 13 0 1 1 837 44" stroke="#969696" strokeWidth="8" />
        <path d="M832.500 57A13 13 0 1 1 837 45" stroke="#fff" strokeWidth="2.500" />
        <path d="M825 44.500h20l-9 11z" fill="#fff" stroke="#969696" strokeWidth="2.400" />
      </Canvas>
      <PaneHandle aria-label="Toggle text pane"><Icon w={8} h={10}><path d="M1 1l4 4-4 4" stroke="#777" strokeWidth="1.600" /></Icon></PaneHandle>
      <TextPane>
        <PaneHeader>
          Type your text here
          <button aria-label="Close text pane"><Icon w={14} h={14}><path d="M1 1l12 12M13 1L1 13" stroke="#333" strokeWidth="1.500" /></Icon></button>
        </PaneHeader>
        <PaneList>
          <PaneItem $level={0} $on><Bullet />[Text]</PaneItem>
          <PaneItem $level={1}>
            <Icon w={10} h={10}><path d="M0 0v6h6" stroke="#777" /><circle cx="7" cy="6" r="3" fill="#000" /></Icon>
            [Text]
          </PaneItem>
          <PaneItem $level={1}><Bullet />[Text]</PaneItem>
          <PaneItem $level={1}><Bullet />[Text]</PaneItem>
          <PaneItem $level={1}><Bullet />[Text]</PaneItem>
        </PaneList>
        <PaneFooter>Organization Chart...</PaneFooter>
      </TextPane>
    </GridPane>
    <VScroll>
      <ScrollButton aria-label="Scroll up"><Triangle dir="up" size={11} /></ScrollButton>
      <VTrack><VThumb /></VTrack>
      <ScrollButton aria-label="Scroll down"><Triangle dir="down" size={11} /></ScrollButton>
    </VScroll>
  </SheetArea>
);

const SheetBarView = () => (
  <SheetBar>
    <SheetNav>
      <button aria-label="Previous sheet"><Triangle dir="left" size={12} color="#bbb" /></button>
      <button aria-label="Next sheet"><Triangle dir="right" size={12} color="#bbb" /></button>
    </SheetNav>
    <SheetTab>Sheet1</SheetTab>
    <AddSheet aria-label="New sheet">
      <Icon w={22} h={22}><circle cx="11" cy="11" r="10" stroke="#777" strokeWidth="1.200" /><path d="M11 6v10M6 11h10" stroke="#777" strokeWidth="1.800" /></Icon>
    </AddSheet>
    <HScroll>
      <Dots><i /><i /><i /></Dots>
      <ScrollButton aria-label="Scroll left"><Triangle dir="left" size={11} /></ScrollButton>
      <HTrack><HThumb /></HTrack>
      <ScrollButton aria-label="Scroll right"><Triangle dir="right" size={11} /></ScrollButton>
    </HScroll>
  </SheetBar>
);

/* ---------- status bar ---------- */

const StatusBar = styled.footer`
  display: flex;
  align-items: center;
  flex: none;
  height: 32px;
  padding: 0 19px 0 12px;
  background: #f3f2f1;
  font-size: 15px;
`;

const Ready = styled.span`
  width: 69px;
  padding-bottom: 2px;
`;

const ViewButton = styled.button<{ $on?: boolean }>`
  display: grid;
  place-items: center;
  width: 60px;
  height: 32px;
  background: ${(p) => (p.$on ? "#c8c6c4" : "transparent")};
`;

const StatusRight = styled.div`
  display: flex;
  align-items: center;
  margin-left: auto;
  padding-bottom: 2px;
`;

const Zoom = styled.input`
  appearance: none;
  width: 148px;
  height: 20px;
  margin: 0 8px;
  background:
    linear-gradient(#a8a8a8, #a8a8a8) 74px 50% / 2px 8px no-repeat,
    linear-gradient(#a8a8a8, #a8a8a8) 0 50% / 100% 2px no-repeat;
  &::-webkit-slider-thumb {
    appearance: none;
    width: 8px;
    height: 16px;
    background: #6a6a6a;
  }
`;

const ZoomValue = styled.span`
  width: 50px;
  text-align: right;
`;

const StatusView = () => (
  <StatusBar>
    <Ready>Ready</Ready>
    <button aria-label="Record macro">
      <Icon w={22} h={20}>
        <path d="M9 19H1V1h20v7M1 5h20M4 9h5M4 12h3M4 15h3" stroke={DARK} strokeWidth="1.500" />
        <circle cx="15" cy="14" r="5.500" stroke={DARK} strokeWidth="1.400" /><circle cx="15" cy="14" r="3" fill={DARK} />
      </Icon>
    </button>
    <StatusRight>
      <ViewButton $on aria-label="Normal">
        <Icon w={20} h={20}><path d="M1 1h18v18H1zM1 7h18M1 13h18M7 1v18M13 1v18" stroke="#222" strokeWidth="1.500" /></Icon>
      </ViewButton>
      <ViewButton aria-label="Page Layout">
        <Icon w={20} h={20}><path d="M1 1h18v18H1zM5 4h10v12H5zM7 7h6M7 10h6M7 13h6" stroke={DARK} strokeWidth="1.400" /></Icon>
      </ViewButton>
      <ViewButton aria-label="Page Break Preview">
        <Icon w={20} h={20}><path d="M1 1h18v18H1zM1 12h13M7 1v11M14 1v11" stroke={DARK} strokeWidth="1.400" /></Icon>
      </ViewButton>
      <button aria-label="Zoom out"><Icon w={20} h={12}><path d="M8 6h12" stroke={DARK} strokeWidth="1.300" /></Icon></button>
      <Zoom type="range" min={10} max={400} defaultValue={177} aria-label="Zoom" />
      <button aria-label="Zoom in"><Icon w={12} h={12}><path d="M0 6h12M6 0v12" stroke={DARK} strokeWidth="1.300" /></Icon></button>
      <ZoomValue>85%</ZoomValue>
    </StatusRight>
  </StatusBar>
);

/* ---------- taskbar ---------- */

const Taskbar = styled.footer`
  display: flex;
  flex: none;
  height: 60px;
  background: #1b202e;
  color: #fff;
`;

const StartButton = styled.button`
  display: grid;
  place-items: center;
  width: 72px;
`;

const TaskSearch = styled.label`
  display: flex;
  align-items: center;
  gap: 18px;
  width: 515px;
  padding-left: 16px;
  border: 2px solid #bdbdbd;
  background: #f2f2f2;
`;

const TaskSearchInput = styled.input`
  flex: 1;
  min-width: 0;
  padding: 3px 0 0;
  border: 0;
  background: transparent;
  font-size: 21px;
  outline: none;
  &::placeholder { color: #2b2b2b; opacity: 1; }
`;

const TaskButton = styled.button<{ $open?: boolean; $on?: boolean; $multi?: boolean }>`
  display: grid;
  place-items: center;
  width: 75px;
  background:
    linear-gradient(90deg, #76b9ed ${(p) => (p.$multi ? "48px" : "75px")}, #5f8fb8 0) bottom center / ${(p) => (p.$open ? (p.$on ? 73 : 61) : 0)}px 3px no-repeat,
    linear-gradient(#4a4e59, #4a4e59) center / ${(p) => (p.$on ? 73 : 0)}px 100% no-repeat;
`;

const Apps = styled.div`
  display: flex;
  margin-left: -1px;
`;

const Letter = styled.text`
  font-family: "Noto Sans", sans-serif;
  font-weight: 700;
  font-size: 14px;
  fill: #fff;
  text-anchor: middle;
`;

const Tray = styled.div`
  display: flex;
  align-items: center;
  gap: 12px;
  margin-left: auto;
  padding-right: 6px;
`;

const Language = styled.div`
  display: flex;
  align-items: center;
  align-self: flex-start;
  gap: 8px;
  padding-top: 4px;
  margin-right: 20px;
  font-size: 16px;
`;

const Ime = styled.span`
  display: grid;
  place-items: center;
  width: 22px;
  height: 22px;
  background: #fff;
  color: #000;
  font-family: "Noto Sans CJK SC", sans-serif;
  font-size: 19px;
  line-height: 22px;
`;

const ImeMode = styled.span`
  font-family: "Noto Sans CJK SC", sans-serif;
  font-size: 22px;
  line-height: 24px;
  margin-right: 10px;
`;

const Clock = styled.div`
  width: 106px;
  padding: 0 0 0 8px;
  font-size: 17px;
  line-height: 28px;
  text-align: center;
`;

const Notifications = styled.button`
  position: relative;
  display: flex;
  align-items: flex-start;
  width: 60px;
  height: 60px;
  margin-left: 4px;
  padding: 18px 0 0 4px;
  border-right: 1px solid #777;
`;

const Badge = styled.span`
  position: absolute;
  left: 15px;
  top: 30px;
  display: grid;
  place-items: center;
  width: 24px;
  height: 24px;
  border: 1px solid #999;
  border-radius: 50%;
  background: #2c2f36;
  font-size: 15px;
  font-weight: 600;
  color: #fff;
`;

const TaskbarView = () => (
  <Taskbar>
    <StartButton aria-label="Start">
      <Icon w={24} h={24}><path d="M0 3l10-1v9H0zM11 2l13-2v11H11zM0 12h10v9L0 20zM11 12h13v12l-13-2z" fill="#fff" /></Icon>
    </StartButton>
    <TaskSearch>
      <Icon w={24} h={24}><circle cx="16" cy="8" r="7.200" stroke="#111" strokeWidth="1.500" /><path d="M11 13L1 23" stroke="#111" strokeWidth="1.500" /></Icon>
      <TaskSearchInput type="search" aria-label="Search" placeholder="Type here to search" />
    </TaskSearch>
    <Apps>
      <TaskButton aria-label="Cortana">
        <Icon w={24} h={24}><circle cx="12" cy="12" r="10" stroke="#fff" strokeWidth="2.600" /></Icon>
      </TaskButton>
      <TaskButton aria-label="Task View">
        <Icon w={26} h={24}><path d="M1 0v4h16V0M1 7h16v10H1zM1 24v-4h16v4M24 0v24" stroke="#fff" strokeWidth="1.200" /><path d="M22 8h4v4h-4z" fill="#fff" /></Icon>
      </TaskButton>
      <TaskButton $open aria-label="File Explorer">
        <Icon w={32} h={28}>
          <path d="M0 2q0-2 2-2h9l3 3h16q2 0 2 2v20H0z" fill="#fbc94a" /><path d="M0 2q0-2 2-2h9l3 3-2 2H0z" fill="#d99500" />
          <path d="M0 8h32v17H0z" fill="#ffd868" />
          <path d="M6 15q0-2 2-2h16q2 0 2 2v12h-6v-7h-8v7H6z" fill="#3a96dd" />
        </Icon>
      </TaskButton>
      <TaskButton aria-label="Chrome">
        <Icon w={34} h={34}>
          <circle cx="17" cy="17" r="17" fill="#fc4" />
          <path d="M17 17L2 9A17 17 0 0 0 15 34l9-13z" fill="#1da462" />
          <path d="M2.300 8.500A17 17 0 0 1 32 9H17l-7 11z" fill="#dd5144" />
          <circle cx="17" cy="17" r="8" fill="#fff" /><circle cx="17" cy="17" r="6.400" fill="#4c8bf5" />
        </Icon>
      </TaskButton>
      <TaskButton $open $multi aria-label="Outlook">
        <Icon w={40} h={38}>
          <path d="M10 0h25v20H10z" fill="#0a66b8" /><path d="M10 6h9v7h-9zM19 13h8v7h-8z" fill="#0e7fd6" /><path d="M19 6h8v7h-8z" fill="#28a8ea" /><path d="M27 6h8v7h-8z" fill="#50d9ff" />
          <path d="M8 19h28v13H8z" fill="#1490df" />
          <rect y="8" width="18" height="19" rx="1.500" fill="#0f6cbd" /><Letter x="9" y="23">O</Letter>
          <path d="M17 22h23v16H17z" fill="#e8b574" /><path d="M17 23l11.500 9L40 23" stroke="#fff" strokeWidth="1.600" />
        </Icon>
      </TaskButton>
      <TaskButton $open $on aria-label="Excel">
        <Icon w={36} h={32}>
          <path d="M8 0h14v8H8z" fill="#21a366" /><path d="M22 0h14v8H22z" fill="#33c481" /><path d="M8 8h14v8H8z" fill="#107c41" /><path d="M22 8h14v8H22z" fill="#21a366" />
          <path d="M8 16h28v8H8z" fill="#107c41" /><path d="M8 24h28v8H8z" fill="#185c37" /><path d="M8 16h14v8H8z" fill="#185c37" />
          <rect y="7" width="18" height="18" rx="1.500" fill="#107c41" /><Letter x="9" y="21">X</Letter>
        </Icon>
      </TaskButton>
      <TaskButton $open $multi aria-label="Internet Explorer">
        <Icon w={36} h={36}>
          <path d="M9 20h20A10.500 10.500 0 1 0 27.500 27" stroke="#54d3f7" strokeWidth="5.500" />
          <path d="M9 34C-2 36 0 24 10 13S34-3 34 5c0 2 0 3-1 5" stroke="#f9c40f" strokeWidth="2.800" />
        </Icon>
      </TaskButton>
      <TaskButton $open aria-label="Word">
        <Icon w={36} h={32}>
          <path d="M8 0h28v8H8z" fill="#41a5ee" /><path d="M8 8h28v8H8z" fill="#2b7cd3" /><path d="M8 16h28v8H8z" fill="#185abd" /><path d="M8 24h28v8H8z" fill="#103f91" />
          <rect y="7" width="18" height="18" rx="1.500" fill="#185abd" /><Letter x="9" y="21">W</Letter>
        </Icon>
      </TaskButton>
    </Apps>
    <Tray>
      <Language>CH<Ime>拼</Ime></Language>
      <button aria-label="Show hidden icons"><Icon w={20} h={11}><path d="M1 10l9-9 9 9" stroke="#fff" strokeWidth="1.500" /></Icon></button>
      <Icon w={24} h={18}>
        <path d="M7 6h14v10H7z" fill="#fff" /><path d="M6 4h16v13H6zM23 8v5" stroke="#fff" strokeWidth="1.200" />
        <path d="M0 4h8v4q-4 5-8 0z" fill="#fff" stroke="#1b202e" strokeWidth=".500" /><path d="M2 0v4M6 0v4M4 9v6" stroke="#fff" strokeWidth="1.300" />
      </Icon>
      <Icon w={24} h={19}><path d="M7 1h16v13H4V8M10 18h10M15 14v4M1 1h6v7H1zM4 3v3" stroke="#fff" strokeWidth="1.300" /></Icon>
      <Icon w={24} h={20}>
        <path d="M1 7h3l6-6v18l-6-6H1z" stroke="#fff" strokeWidth="1.300" /><path d="M13 7q3 3 0 6" stroke="#fff" strokeWidth="1.300" />
        <path d="M16 4q5 6 0 12M19 2q7 8 0 16" stroke="#888" strokeWidth="1.300" />
      </Icon>
      <ImeMode>中</ImeMode>
      <Ime>拼</Ime>
      <Clock>
        <div>11:44 AM</div>
        <div>6/11/2020</div>
      </Clock>
      <Notifications aria-label="Notifications">
        <Icon w={24} h={24}><path d="M0 0h24v18h-9l-5 6v-6H0z" fill="#fff" /><path d="M4 5h16M4 9h16M4 13h10" stroke="#1b202e" strokeWidth="1.400" /></Icon>
        <Badge>11</Badge>
      </Notifications>
    </Tray>
  </Taskbar>
);

/* ---------- site watermark ---------- */

const Watermark = styled.div`
  position: fixed;
  right: 96px;
  bottom: 34px;
  width: 350px;
  height: 170px;
  color: rgba(255, 255, 255, 0.82);
  font-family: "Liberation Sans", "Noto Sans CJK SC", sans-serif;
  font-weight: 700;
  pointer-events: none;
  filter: drop-shadow(0 0 1px #777) drop-shadow(0 0 1px #bbb);
`;

const MarkWord = styled.span<{ $x: number; $y: number; $size: number }>`
  position: absolute;
  left: ${(p) => p.$x}px;
  top: ${(p) => p.$y}px;
  font-size: ${(p) => p.$size}px;
  line-height: 1;
  white-space: nowrap;
`;

const MarkDu = styled(MarkWord)`
  color: rgba(255, 255, 255, 0.9);
  -webkit-text-stroke: 1px #c4c4c4;
`;

const Paw = styled.svg`
  position: absolute;
  left: 116px;
  top: 0;
`;

const WatermarkView = () => (
  <Watermark>
    <MarkWord $x={0} $y={41} $size={78}>Bai</MarkWord>
    <Paw width="110" height="114" viewBox="0 0 110 114" fill="#fff" fillOpacity=".85" aria-hidden="true">
      <ellipse cx="39" cy="19" rx="13" ry="18" /><ellipse cx="69" cy="21" rx="13" ry="17" transform="rotate(8 69 21)" />
      <ellipse cx="15" cy="44" rx="13" ry="17" transform="rotate(-8 15 44)" /><ellipse cx="89" cy="51" rx="13" ry="17" transform="rotate(8 89 51)" />
      <path d="M50 45c14 0 18 16 28 25 12 10 21 24 10 36-8 8-20 4-38 4s-28 4-37-3C2 96 9 80 20 71c12-9 16-26 30-26z" />
    </Paw>
    <MarkDu $x={138} $y={55} $size={48}>du</MarkDu>
    <MarkWord $x={221} $y={50} $size={58}>经验</MarkWord>
    <MarkWord $x={4} $y={120} $size={39}>jingyan.baidu.com</MarkWord>
  </Watermark>
);

export default function App() {
  return (
    <App_>
      <GlobalStyle />
      <TitleBarView />
      <TabsView />
      <RibbonView />
      <FormulaBarView />
      <SensitivityView />
      <SheetView />
      <SheetBarView />
      <StatusView />
      <TaskbarView />
      <WatermarkView />
    </App_>
  );
}
